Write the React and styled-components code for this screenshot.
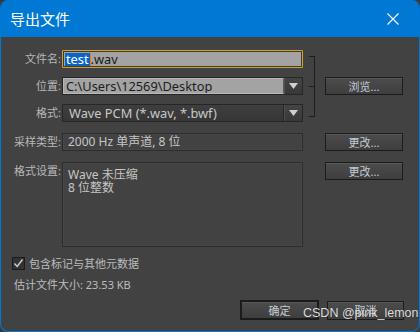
import React from "react";
import styled, { createGlobalStyle } from "styled-components";

const Global = createGlobalStyle`
  html, body { margin: 0; padding: 0; background: #3a3a3a; }
  body { width: 420px; height: 332px; overflow: hidden; }
  * { box-sizing: border-box; }
`;

const FONT = `"Noto Sans", "Noto Sans CJK SC", sans-serif`;

const Window = styled.div`
  position: relative;
  width: 420px;
  height: 332px;
  background: #424242;
  border: 1px solid #0078d4;
  border-top: none;
  border-radius: 8px;
  overflow: hidden;
  font-family: ${FONT};
  font-size: 11px;
  color: #bdbdbd;
  display: flex;
  flex-direction: column;
`;

const TitleBar = styled.div`
  height: 37px;
  flex: none;
  background: #0078d4;
  margin: 0 -1px;
  display: flex;
  align-items: center;
  justify-content: space-between;
  padding: 0 21px 0 10px;
  color: #fff;
  font-size: 15px;
`;

const Body = styled.div`
  flex: 1;
  display: flex;
  flex-direction: column;
  padding: 13px 0 0 0;
`;

const Group = styled.div`
  display: flex;
  align-items: center;
`;

const Rows = styled.div`
  display: flex;
  flex-direction: column;
  gap: 9px;
`;

const Row = styled.div`
  display: flex;
  align-items: ${(p) => (p.$top ? "flex-start" : "center")};
  margin-top: ${(p) => p.$mt || 0}px;
`;

const Label = styled.div`
  width: 61px;
  padding-right: 1px;
  text-align: right;
  color: #b8b8b8;
  white-space: nowrap;
  line-height: 18px;
  height: 18px;
`;

const TextInput = styled.div`
  width: 241px;
  height: 18px;
  border: 1px solid #d6a21e;
  box-shadow: inset 0 0 0 1px #3b3b3b;
  background: #a3a3a3;
  color: #1a1a1a;
  font-size: 12.8px;
  line-height: 16px;
  padding: 0 0 0 2px;
  display: flex;
  align-items: center;
  border-radius: 1px;
`;

const Sel = styled.span`
  background: #0a64c8;
  color: #fff;
  padding: 0 1px;
  line-height: 13px;
  border-right: 1px solid #f07b12;
`;

const Combo = styled.div`
  width: 241px;
  height: 18px;
  display: flex;
  border: 1px solid #262626;
  background: ${(p) => (p.$light ? "#2e2e2e" : "linear-gradient(#3e3e3e, #363636)")};
`;

const ComboText = styled.div`
  flex: 1;
  font-size: 12.8px;
  padding: 0 0 0 ${(p) => (p.$light ? 2 : 6)}px;
  color: ${(p) => (p.$light ? "#1c1c1c" : "#c8c8c8")};
  background: ${(p) => (p.$light ? "#a3a3a3" : "transparent")};
  border: ${(p) => (p.$light ? "1px solid #b8b8b8" : "none")};
  border-right: 1px solid ${(p) => (p.$light ? "#5a5a5a" : "#262626")};
  line-height: ${(p) => (p.$light ? 14 : 16)}px;
  white-space: nowrap;
  overflow: hidden;
`;

const Arrow = styled.div`
  width: 18px;
  display: flex;
  align-items: center;
  justify-content: center;
  background: linear-gradient(#444, #383838);
  border-left: 1px solid #505050;
`;

const Bracket = styled.div`
  width: 6px;
  height: 61px;
  margin-left: 6px;
  border: 1px solid #1e1e1e;
  border-left: none;
  position: relative;
  &::after {
    content: "";
    position: absolute;
    left: 0;
    right: 0;
    top: 29px;
    border-top: 1px solid #1e1e1e;
  }
`;

const Button = styled.div`
  width: ${(p) => p.$w || 78}px;
  height: ${(p) => p.$h || 18}px;
  margin-left: ${(p) => p.$ml || 0}px;
  border: ${(p) => (p.$default ? 2 : 1)}px solid #1b1b1b;
  background: linear-gradient(#4c4c4c, #3e3e3e);
  box-shadow: inset 0 1px 0 #585858;
  color: #c4ccd4;
  font-size: 11px;
  display: flex;
  align-items: center;
  justify-content: center;
  line-height: 1;
  flex: none;
`;

const Box = styled.div`
  width: 241px;
  height: ${(p) => p.$h}px;
  border: 1px solid #2c2c2c;
  box-shadow: inset 0 0 0 1px #474747;
  color: #c6c6c6;
  font-size: 12px;
  padding: ${(p) => (p.$multi ? "5px 0 0 5px" : "0 0 0 5px")};
  line-height: 16px;
`;

const BoxLine = styled.div`
  height: 13px;
  line-height: 13px;
  white-space: nowrap;
`;

const CheckRow = styled.label`
  display: flex;
  align-items: center;
  gap: 4px;
  height: 13px;
  margin: 10px 0 0 11px;
  font-size: 11px;
  line-height: 13px;
  color: #bdbdbd;
`;

const CheckBox = styled.span`
  width: 13px;
  height: 13px;
  border: 1px solid #1b1b1b;
  background: #333;
  display: flex;
  align-items: center;
  justify-content: center;
`;

const SizeText = styled.div`
  margin: 8px 0 0 13px;
  height: 14px;
  line-height: 14px;
  font-size: 11px;
  color: #bdbdbd;
`;

const Footer = styled.div`
  display: flex;
  justify-content: flex-end;
  align-items: center;
  gap: 8px;
  padding-right: 15px;
  margin-top: 8px;
`;

const Watermark = styled.div`
  position: absolute;
  left: 302px;
  top: 306px;
  font-family: "Liberation Sans", Arial, sans-serif;
  font-size: 12.5px;
  color: rgba(255, 255, 255, 0.85);
  text-shadow: 0 0 1px rgba(0, 0, 0, 0.4);
  pointer-events: none;
  white-space: nowrap;
`;

const Tri = () => (
  <svg width="9" height="6" viewBox="0 0 9 6">
    <path d="M0 0 H9 L4.5 6 Z" fill="#cfcfcf" />
  </svg>
);

export default function App() {
  return (
    <>
      <Global />
      <Window>
        <TitleBar>
          <span>导出文件</span>
          <svg width="12" height="12" viewBox="0 0 12 12">
            <path d="M0.5 0.5 L11.5 11.5 M11.5 0.5 L0.5 11.5" stroke="#fff" strokeWidth="1.1" />
          </svg>
        </TitleBar>
        <Body>
          <Group>
            <Rows>
              <Row>
                <Label>文件名:</Label>
                <TextInput>
                  <Sel>test</Sel>.wav
                </TextInput>
              </Row>
              <Row>
                <Label>位置:</Label>
                <Combo>
                  <ComboText $light>C:\Users\12569\Desktop</ComboText>
                  <Arrow>
                    <Tri />
                  </Arrow>
                </Combo>
              </Row>
              <Row>
                <Label>格式:</Label>
                <Combo>
                  <ComboText>Wave PCM (*.wav, *.bwf)</ComboText>
                  <Arrow>
                    <Tri />
                  </Arrow>
                </Combo>
              </Row>
            </Rows>
            <Bracket />
            <Button $ml={10}>浏览...</Button>
          </Group>
          <Row $mt={11}>
            <Label>采样类型:</Label>
            <Box $h={18}>2000 Hz 单声道, 8 位</Box>
            <Button $ml={22} $h={18}>更改...</Button>
          </Row>
          <Row $top $mt={11}>
            <Label>格式设置:</Label>
            <Box $h={85} $multi>
              <BoxLine>Wave 未压缩</BoxLine>
              <BoxLine>8 位整数</BoxLine>
            </Box>
            <Button $ml={22}>更改...</Button>
          </Row>
          <CheckRow>
            <CheckBox>
              <svg width="11" height="11" viewBox="0 0 11 11">
                <path d="M1.5 5.5 L4.2 8.5 L9.5 1.5" stroke="#d0d0d0" strokeWidth="1.4" fill="none" />
              </svg>
            </CheckBox>
            包含标记与其他元数据
          </CheckRow>
          <SizeText>估计文件大小: 23.53 KB</SizeText>
          <Footer>
            <Button $default $w={79} $h={20}>确定</Button>
            <Button $w={77} $h={19}>取消</Button>
          </Footer>
        </Body>
        <Watermark>CSDN @pink_lemon</Watermark>
      </Window>
    </>
  );
}
